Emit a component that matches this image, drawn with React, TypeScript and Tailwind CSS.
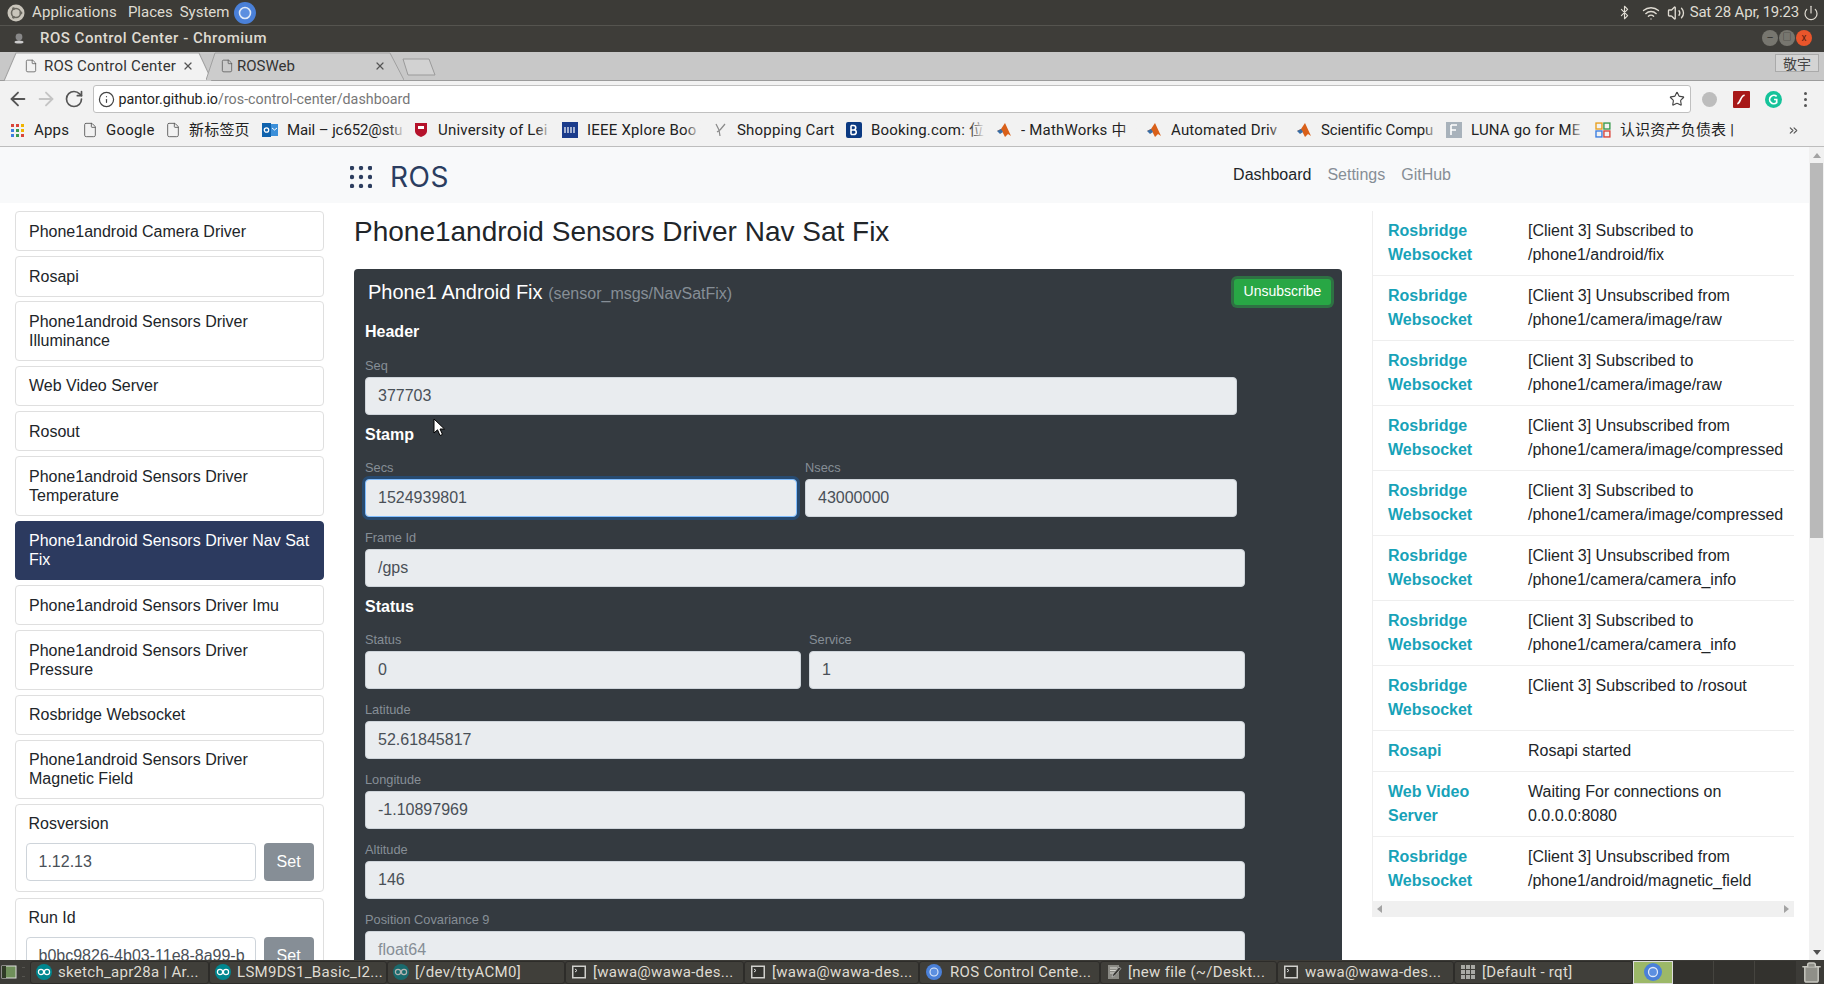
import { ArrowLeft, ArrowRight, RotateCw, Info, Star, File, Bluetooth, Wifi, Volume2, Power, Trash2, ChevronsRight, X } from 'lucide-react';

const uiFont = "font-['Roboto','Noto_Sans_CJK_SC',sans-serif]";

const ChromeLogo = ({ className }: { className: string }) => (
  <svg viewBox="0 0 20 20" className={className}>
    <circle cx="10" cy="10" r="10" fill="#4a80d8" />
    <circle cx="10" cy="10" r="5" fill="#5c8fe0" stroke="#dfe9f8" strokeWidth="1.4" />
  </svg>
);

const ArduinoIcon = ({ dim }: { dim?: boolean }) => (
  <svg viewBox="0 0 16 16" className={dim ? 'w-4 h-4 opacity-60' : 'w-4 h-4'}>
    <circle cx="8" cy="8" r="8" fill="#00878f" />
    <circle cx="5" cy="8" r="2.6" fill="none" stroke="#fff" strokeWidth="1.2" />
    <circle cx="11" cy="8" r="2.6" fill="none" stroke="#fff" strokeWidth="1.2" />
  </svg>
);

const TerminalIcon = () => (
  <svg viewBox="0 0 16 16" className="w-4 h-4">
    <rect x="1" y="1.5" width="14" height="13" fill="#d0d0cc" />
    <rect x="2.5" y="3" width="11" height="10" fill="#33332f" />
    <path d="M4 5l2 1.5L4 8" stroke="#ddd" fill="none" strokeWidth="1" />
  </svg>
);

const EditorIcon = () => (
  <svg viewBox="0 0 16 16" className="w-4 h-4">
    <rect x="2" y="1" width="11" height="14" fill="#8a8a84" />
    <path d="M4 4h7M4 6.5h7M4 9h5" stroke="#d6d6d0" strokeWidth="1" />
    <path d="M6 13l1-3 6-7 2 1.5-6 7z" fill="#3a3a36" stroke="#ccc" strokeWidth="0.6" />
  </svg>
);

const GridIcon = () => (
  <svg viewBox="0 0 16 16" className="w-4 h-4" fill="#a9a9a4">
    {[1, 6, 11].map((y) => [1, 6, 11].map((x) => <rect key={`${x}-${y}`} x={x} y={y} width="4" height="4" />))}
  </svg>
);

const bookmarks = [
  { label: 'Apps', box: 'w-[73px]', text: 'w-[36px]', icon: 'apps', fade: false },
  { label: 'Google', box: 'w-[83px]', text: 'w-[52px]', icon: 'file', fade: false },
  { label: '新标签页', box: 'w-[95px]', text: 'w-[62px]', icon: 'file', fade: false },
  { label: 'Mail – jc652@stu', box: 'w-[151px]', text: 'w-[118px] tracking-[-0.1px]', icon: 'mail', fade: true },
  { label: 'University of Lei', box: 'w-[149px]', text: 'w-[114px]', icon: 'uni', fade: true },
  { label: 'IEEE Xplore Boo', box: 'w-[150px]', text: 'w-[114px]', icon: 'ieee', fade: true },
  { label: 'Shopping Cart', box: 'w-[134px]', text: 'w-[102px]', icon: 'cart', fade: false },
  { label: 'Booking.com: 位', box: 'w-[150px]', text: 'w-[114px]', icon: 'booking', fade: true },
  { label: '- MathWorks 中', box: 'w-[150px]', text: 'w-[116px]', icon: 'matlab', fade: true },
  { label: 'Automated Driv', box: 'w-[150px]', text: 'w-[114px]', icon: 'matlab', fade: true },
  { label: 'Scientific Compu', box: 'w-[150px]', text: 'w-[118px] tracking-[-0.1px]', icon: 'matlab', fade: true },
  { label: 'LUNA go for ME', box: 'w-[149px]', text: 'w-[114px]', icon: 'luna', fade: true },
  { label: '认识资产负债表 |', box: 'w-[140px]', text: 'w-[116px]', icon: 'asset', fade: false },
];

const BookmarkIcon = ({ kind }: { kind: string }) => {
  if (kind === 'file') return <File className="w-4 h-4 -ml-[2px] -mr-[1px] text-[#555]" strokeWidth={1.3} />;
  if (kind === 'apps') {
    const colors = ['#d9453a', '#d9453a', '#f0b400', '#3d7fe0', '#3b9b4f', '#f0b400', '#3d7fe0', '#3b9b4f', '#d9453a'];
    return (
      <span className="grid grid-cols-3 gap-[2px] w-[13px] mr-[1px]">
        {colors.map((c, i) => (
          <svg key={i} viewBox="0 0 3 3" className="w-[3px] h-[3px]"><rect width="3" height="3" fill={c} /></svg>
        ))}
      </span>
    );
  }
  if (kind === 'mail') return (
    <svg viewBox="0 0 16 16" className="w-4 h-4"><rect x="5" y="2" width="11" height="12" fill="#3b8fd9" /><rect y="1" width="9" height="14" fill="#0f62ad" /><circle cx="4.5" cy="8" r="2.2" fill="none" stroke="#fff" strokeWidth="1.3" /><path d="M10 6l2.5 2L15 6" stroke="#fff" fill="none" /></svg>
  );
  if (kind === 'uni') return (
    <svg viewBox="0 0 16 16" className="w-4 h-4"><path d="M2 1h12v8c0 3-3 5-6 6-3-1-6-3-6-6z" fill="#b5122b" /><path d="M5 4h6v3H5z" fill="#fff" /></svg>
  );
  if (kind === 'ieee') return (
    <svg viewBox="0 0 16 16" className="w-4 h-4"><rect width="16" height="16" fill="#1b3c8c" /><path d="M3 5v6M6 5v6M9 5v6M12 5v6" stroke="#fff" strokeWidth="1.2" /></svg>
  );
  if (kind === 'cart') return (
    <svg viewBox="0 0 16 16" className="w-4 h-4"><path d="M4 2l3 6 1 6M8 8l5-6M8 8L5 10" stroke="#8a8a8a" fill="none" strokeWidth="1.2" /></svg>
  );
  if (kind === 'booking') return (
    <svg viewBox="0 0 16 16" className="w-4 h-4"><rect width="16" height="16" rx="2" fill="#0b3a82" /><path d="M5 3.5v9M5 3.5h2.5a2.2 2.2 0 010 4.5H5m0 0h3a2.2 2.2 0 010 4.5H5" stroke="#fff" fill="none" strokeWidth="1.6" /></svg>
  );
  if (kind === 'matlab') return (
    <svg viewBox="0 0 16 16" className="w-4 h-4"><path d="M1 9l4-2 4-6 6 13-3-2-3 3-3-6z" fill="#d9601a" /><path d="M1 9l4-2 2 3-3 2z" fill="#3a6ea5" /></svg>
  );
  if (kind === 'luna') return (
    <svg viewBox="0 0 16 16" className="w-4 h-4"><rect width="16" height="16" fill="#a8b2bb" /><path d="M5 3h6M5 3v10M5 8h5" stroke="#fff" strokeWidth="1.6" fill="none" /></svg>
  );
  return (
    <svg viewBox="0 0 16 16" className="w-4 h-4" fill="none" strokeWidth="1.4"><rect x="1" y="1" width="6" height="6" stroke="#e8a020" /><rect x="9" y="1" width="6" height="6" stroke="#3b9b4f" /><rect x="1" y="9" width="6" height="6" stroke="#3d7fe0" /><rect x="9" y="9" width="6" height="6" stroke="#d9453a" /></svg>
  );
};

const sidebarItems = [
  { label: 'Phone1android Camera Driver' },
  { label: 'Rosapi' },
  { label: 'Phone1android Sensors Driver Illuminance' },
  { label: 'Web Video Server' },
  { label: 'Rosout' },
  { label: 'Phone1android Sensors Driver Temperature' },
  { label: 'Phone1android Sensors Driver Nav Sat Fix', active: true },
  { label: 'Phone1android Sensors Driver Imu' },
  { label: 'Phone1android Sensors Driver Pressure' },
  { label: 'Rosbridge Websocket' },
  { label: 'Phone1android Sensors Driver Magnetic Field' },
];

const logs = [
  ['Rosbridge Websocket', '[Client 3] Subscribed to /phone1/android/fix'],
  ['Rosbridge Websocket', '[Client 3] Unsubscribed from /phone1/camera/image/raw'],
  ['Rosbridge Websocket', '[Client 3] Subscribed to /phone1/camera/image/raw'],
  ['Rosbridge Websocket', '[Client 3] Unsubscribed from /phone1/camera/image/compressed'],
  ['Rosbridge Websocket', '[Client 3] Subscribed to /phone1/camera/image/compressed'],
  ['Rosbridge Websocket', '[Client 3] Unsubscribed from /phone1/camera/camera_info'],
  ['Rosbridge Websocket', '[Client 3] Subscribed to /phone1/camera/camera_info'],
  ['Rosbridge Websocket', '[Client 3] Subscribed to /rosout'],
  ['Rosapi', 'Rosapi started'],
  ['Web Video Server', 'Waiting For connections on 0.0.0.0:8080'],
  ['Rosbridge Websocket', '[Client 3] Unsubscribed from /phone1/android/magnetic_field'],
];

const tasks = [
  { label: 'sketch_apr28a | Ar...', w: 'w-[179px]', icon: <ArduinoIcon /> },
  { label: 'LSM9DS1_Basic_I2...', w: 'w-[178px]', icon: <ArduinoIcon /> },
  { label: '[/dev/ttyACM0]', w: 'w-[178px]', icon: <ArduinoIcon dim /> },
  { label: '[wawa@wawa-des...', w: 'w-[179px]', icon: <TerminalIcon /> },
  { label: '[wawa@wawa-des...', w: 'w-[175px]', icon: <TerminalIcon /> },
  { label: 'ROS Control Cente...', w: 'w-[181px]', icon: <ChromeLogo className="w-4 h-4 ml-[1px] mr-[2px]" /> },
  { label: '[new file (~/Deskt...', w: 'w-[177px]', icon: <EditorIcon /> },
  { label: 'wawa@wawa-des...', w: 'w-[177px]', icon: <TerminalIcon /> },
  { label: '[Default - rqt]', w: 'w-[179px]', icon: <GridIcon /> },
];

const Field = ({ label, value, className = '', focus, muted }: { label: string; value: string; className?: string; focus?: boolean; muted?: boolean }) => (
  <div className={className}>
    <div className="text-[12.8px] leading-[15px] pb-[4.2px] text-[#868e96]">{label}</div>
    <div
      className={
        focus
          ? 'h-[38px] rounded-[4px] border border-[#80bdff] bg-[#e9ecef] px-3 leading-[36px] text-[#495057] shadow-[0_0_0_3px_rgba(0,123,255,0.25)]'
          : muted
            ? 'h-[38px] rounded-[4px] border border-[#ced4da] bg-[#e9ecef] px-3 leading-[36px] text-[#868e96]'
            : 'h-[38px] rounded-[4px] border border-[#ced4da] bg-[#e9ecef] px-3 leading-[36px] text-[#495057]'
      }
    >
      {value}
    </div>
  </div>
);

const ParamCard = ({ label, value }: { label: string; value: string }) => (
  <div className="rounded-[4px] border border-[#dfdfdf] bg-white px-[9.5px] pt-[5px] pb-[10px] mb-[5.6px]">
    <div className="pl-[3px] h-[33px] leading-[24px] text-[#212529] pt-[2px]">{label}</div>
    <div className="flex gap-2">
      <div className="w-[231px] h-[38px] rounded-[4px] border border-[#ced4da] px-3 leading-[36px] text-[#495057] overflow-hidden whitespace-nowrap">{value}</div>
      <div className="w-[50px] h-[38px] rounded-[4px] bg-[#868e96] text-white text-center leading-[38px]">Set</div>
    </div>
  </div>
);

export default function App() {
  return (
    <div className="w-[1824px] h-[984px] overflow-hidden flex flex-col bg-white font-['Liberation_Sans',sans-serif] text-[16px] text-[#212529]">
      {/* Ubuntu top panel */}
      <div className={`h-[26px] shrink-0 bg-[#3c3b37] border-b border-[#55544f] flex items-center pl-[7px] pr-[5px] text-[15px] text-[#dfdbd2] ${uiFont}`}>
        <svg viewBox="0 0 18 18" className="w-[18px] h-[18px]">
          <circle cx="9" cy="9" r="8.5" fill="#c9c5bb" />
          <circle cx="9" cy="9" r="4.5" fill="none" stroke="#6a6860" strokeWidth="1.6" />
          <circle cx="14" cy="9" r="1.4" fill="#6a6860" />
          <circle cx="6.5" cy="4.7" r="1.4" fill="#6a6860" />
          <circle cx="6.5" cy="13.3" r="1.4" fill="#6a6860" />
        </svg>
        <span className="ml-[7px] tracking-[0.15px]">Applications</span>
        <span className="ml-[11px]">Places</span>
        <span className="ml-[7px]">System</span>
        <ChromeLogo className="w-[22px] h-[22px] ml-[5px]" />
        <div className="ml-auto flex items-center">
          <Bluetooth className="w-[15px] h-[17px] mr-[10px]" strokeWidth={1.8} />
          <Wifi className="w-[18px] h-[18px] mr-[7px]" strokeWidth={1.8} />
          <Volume2 className="w-[18px] h-[18px] mr-[5px]" strokeWidth={1.8} />
          <span className="whitespace-nowrap tracking-[-0.2px]">Sat 28 Apr, 19:23</span>
          <Power className="w-[16px] h-[16px] ml-[4px]" strokeWidth={1.8} />
        </div>
      </div>

      {/* Window title */}
      <div className={`h-[26px] shrink-0 bg-[#3e3d39] flex items-center pl-[14px] pr-[12px] pb-[2px] text-[15px] text-[#dfdbd2] ${uiFont}`}>
        <svg viewBox="0 0 10 14" className="w-[10px] h-[14px]">
          <circle cx="5" cy="6" r="3.4" fill="#888" />
          <ellipse cx="5" cy="11" rx="4.5" ry="1.6" fill="#ccc" />
        </svg>
        <span className="ml-[16px] font-medium tracking-[0.5px]">ROS Control Center - Chromium</span>
        <div className="ml-auto flex items-center gap-[1px]">
          <span className="w-[16px] h-[16px] rounded-full bg-[#77766f] text-center text-[11px] leading-[15px] text-[#33332f]">–</span>
          <span className="w-[16px] h-[16px] rounded-full bg-[#77766f] text-center text-[9px] leading-[15px] text-[#33332f]">□</span>
          <span className="w-[16px] h-[16px] rounded-full bg-[#e9552b] text-center text-[10px] leading-[15px] text-[#5a2010]">x</span>
        </div>
      </div>

      {/* Tab strip */}
      <div className={`h-[29px] shrink-0 bg-[#c8c8c8] border-b border-[#9c9c9c] flex items-end text-[15px] text-[#333] ${uiFont}`}>
        <div className="relative ml-[4px] w-[208px] h-[28px] flex items-center pl-[20px]">
          <svg viewBox="0 0 208 28" className="absolute inset-0 w-[208px] h-[29px]" preserveAspectRatio="none">
            <path d="M0 28L12 1H195L208 28Z" fill="#f2f2f2" stroke="#a0a0a0" />
          </svg>
          <File className="relative w-[14px] h-[16px] text-[#555]" strokeWidth={1.3} />
          <span className="relative ml-[6px] tracking-[0.2px]">ROS Control Center</span>
          <X className="relative ml-[6px] w-[12px] h-[12px] text-[#555]" strokeWidth={2.4} />
        </div>
        <div className="relative -ml-[6px] w-[198px] h-[28px] flex items-center pl-[14px]">
          <svg viewBox="0 0 198 28" className="absolute inset-0 w-[198px] h-[28px]" preserveAspectRatio="none">
            <path d="M0 28L9 1H184L198 28" fill="#cccccc" stroke="#a0a0a0" />
          </svg>
          <File className="relative w-[14px] h-[16px] text-[#555]" strokeWidth={1.3} />
          <span className="relative ml-[3px]">ROSWeb</span>
          <X className="relative ml-auto mr-[18px] w-[12px] h-[12px] text-[#555]" strokeWidth={2.4} />
        </div>
        <svg viewBox="0 0 34 18" className="w-[34px] h-[18px] mb-[4px] -ml-[2px]">
          <path d="M1 1H27L33 17H6Z" fill="#d2d2d2" stroke="#9a9a9a" />
        </svg>
        <div className="ml-auto mr-[5px] mb-[8px] w-[44px] h-[18px] border border-[#aaa] bg-[#d4d4d4] text-center text-[14px] leading-[16px] text-[#444] font-['Noto_Sans_CJK_SC',sans-serif]">敬宇</div>
      </div>

      {/* Toolbar */}
      <div className={`h-[36px] shrink-0 bg-[#f2f2f2] flex items-center pl-[7px] pr-[17px] ${uiFont}`}>
        <ArrowLeft className="w-[22px] h-[22px] text-[#555]" strokeWidth={2} />
        <ArrowRight className="w-[22px] h-[22px] ml-[6px] text-[#c4c4c4]" strokeWidth={2} />
        <RotateCw className="w-[20px] h-[20px] ml-[7px] text-[#555]" strokeWidth={2} />
        <div className="ml-[8.5px] flex-1 h-[28px] bg-white border border-[#c0c0c0] rounded-[3px] flex items-center pl-[4px] pr-[5px] text-[14.3px]">
          <Info className="w-[17px] h-[17px] text-[#444]" strokeWidth={1.7} />
          <span className="ml-[4px] pt-[1px] text-[#222]">pantor.github.io</span>
          <span className="pt-[1px] text-[#777]">/ros-control-center/dashboard</span>
          <Star className="ml-auto w-[16px] h-[16px] text-[#444]" strokeWidth={1.7} />
        </div>
        <div className="ml-[11px] w-[15px] h-[15px] rounded-full bg-[#bdbdbd]" />
        <svg viewBox="0 0 16 16" className="ml-[16px] w-[17px] h-[17px]">
          <rect width="16" height="16" rx="1" fill="#a81818" />
          <path d="M4 12c3 0 3-8 7-8" stroke="#fff" fill="none" strokeWidth="1.6" />
        </svg>
        <svg viewBox="0 0 16 16" className="ml-[15px] w-[17px] h-[17px]">
          <circle cx="8" cy="8" r="8" fill="#15c39a" />
          <path d="M11 5a4 4 0 100 6V8H8.5" stroke="#fff" fill="none" strokeWidth="1.6" />
        </svg>
        <div className="ml-[22px] flex flex-col gap-[3px]">
          <span className="w-[3px] h-[3px] rounded-full bg-[#555]" />
          <span className="w-[3px] h-[3px] rounded-full bg-[#555]" />
          <span className="w-[3px] h-[3px] rounded-full bg-[#555]" />
        </div>
      </div>

      {/* Bookmarks */}
      <div className={`h-[30px] shrink-0 bg-[#f2f2f2] border-b border-[#bdbdbd] flex items-center pl-[11px] pb-[3px] text-[15px] text-[#222] tracking-[0.2px] ${uiFont}`}>
        {bookmarks.map((b) => (
          <div key={b.label} className={`${b.box} shrink-0 flex items-center gap-[9px]`}>
            <BookmarkIcon kind={b.icon} />
            <span className={`${b.text} relative overflow-hidden whitespace-nowrap`}>
              {b.label}
              {b.fade && <span className="absolute right-0 top-0 bottom-0 w-[16px] bg-gradient-to-l from-[#f2f2f2] to-transparent" />}
            </span>
          </div>
        ))}
        <ChevronsRight className="ml-[52px] w-[13px] h-[13px] text-[#555]" />
      </div>

      {/* Page + scrollbar */}
      <div className="flex-1 min-h-0 flex">
        <div className="flex-1 min-w-0 flex flex-col overflow-hidden">
          <div className="h-[56px] shrink-0 bg-[#f8f9fa] flex items-center">
            <svg viewBox="0 0 22 22" className="ml-[350px] w-[22px] h-[22px] mt-[3px]" fill="#2d3e5f">
              {[2, 11, 20].map((y) => [2, 11, 20].map((x) => <circle key={`${x}-${y}`} cx={x} cy={y} r="2.2" />))}
            </svg>
            <span className="ml-[18px] mt-[4px] text-[28px] tracking-[0.5px] text-[#2b3d60] font-['Inter',sans-serif]">ROS</span>
            <div className="ml-auto mr-[358px] flex gap-4">
              <span className="text-[#212529]">Dashboard</span>
              <span className="text-[#868e96]">Settings</span>
              <span className="text-[#868e96]">GitHub</span>
            </div>
          </div>

          <div className="flex-1 min-h-0 flex">
            {/* Sidebar */}
            <div className="w-[339px] shrink-0 pl-[15px] pr-[15px] pt-[8px]">
              {sidebarItems.map((item) => (
                <div
                  key={item.label}
                  className={
                    item.active
                      ? 'mb-[4.8px] rounded-[4px] border border-[#2c3a5f] bg-[#2c3a5f] px-[13px] py-[9.6px] leading-[19.2px] text-white'
                      : 'mb-[4.8px] rounded-[4px] border border-[#dfdfdf] bg-white px-[13px] py-[9.6px] leading-[19.2px]'
                  }
                >
                  {item.label}
                </div>
              ))}
              <ParamCard label="Rosversion" value="1.12.13" />
              <ParamCard label="Run Id" value="b0bc9826-4b03-11e8-8a99-b" />
            </div>

            {/* Main column */}
            <div className="w-[1033px] shrink-0 pl-[15px] pr-[15px] pt-[8px]">
              <h1 className="text-[28px] leading-[33.6px] pt-[4px] mb-[20.4px] text-[#212529]">Phone1android Sensors Driver Nav Sat Fix</h1>
              <div className="relative w-[988px] rounded-t-[4px] bg-[#343a40] pl-[11px] pt-[11px] pb-[40px] text-white">
                <div className="pl-[3px] h-[24px] leading-[24px] text-[20px]">
                  Phone1 Android Fix <span className="text-[16px] text-[#868e96]">(sensor_msgs/NavSatFix)</span>
                </div>
                <div className="absolute top-[10px] right-[11px] w-[97px] h-[26px] rounded-[3px] bg-[#28a745] text-center text-[14px] leading-[25px] shadow-[0_0_0_3px_rgba(40,167,69,0.5)]">Unsubscribe</div>
                <div className="mt-[16.5px] font-bold leading-[24px]">Header</div>
                <Field className="mt-[13.3px] w-[872px]" label="Seq" value="377703" />
                <div className="mt-[8px] font-bold leading-[24px]">Stamp</div>
                <div className="mt-[13px] flex gap-[8px] w-[872px]">
                  <Field className="flex-1" label="Secs" value="1524939801" focus />
                  <Field className="flex-1" label="Nsecs" value="43000000" />
                </div>
                <Field className="mt-[12.8px] w-[880px]" label="Frame Id" value="/gps" />
                <div className="mt-[8px] font-bold leading-[24px]">Status</div>
                <div className="mt-[13px] flex gap-[8px] w-[880px]">
                  <Field className="flex-1" label="Status" value="0" />
                  <Field className="flex-1" label="Service" value="1" />
                </div>
                <Field className="mt-[12.8px] w-[880px]" label="Latitude" value="52.61845817" />
                <Field className="mt-[12.8px] w-[880px]" label="Longitude" value="-1.10897969" />
                <Field className="mt-[12.8px] w-[880px]" label="Altitude" value="146" />
                <Field className="mt-[12.8px] w-[880px]" label="Position Covariance 9" value="float64" muted />
                {/* mouse pointer */}
                <svg viewBox="0 0 12 19" className="absolute left-[79px] top-[149px] w-[12px] h-[19px]">
                  <path d="M1 1v14l3.5-3.2L7 17.5l2.5-1.1L7 11h4.5z" fill="#fff" stroke="#000" strokeWidth="1" />
                </svg>
              </div>
            </div>

            {/* Log */}
            <div className="w-[422px] shrink-0 pt-[8px]">
              <div className="border-l border-[#eeeeee]">
                {logs.map(([name, msg], i) => (
                  <div key={i} className="flex border-b border-[#eeeeee] last:border-b-0 py-[8px] leading-[24px]">
                    <div className="w-[155px] shrink-0 pl-[15px] pr-[20px] font-bold text-[#17a2b8]">{name}</div>
                    <div className="flex-1 pr-[6px]">{msg}</div>
                  </div>
                ))}
              </div>
              <div className="h-[16px] bg-[#f0f0f0] flex items-center justify-between px-[5px]">
                <svg viewBox="0 0 5 8" className="w-[5px] h-[8px]"><path d="M5 0v8L0 4z" fill="#a3a3a3" /></svg>
                <svg viewBox="0 0 5 8" className="w-[5px] h-[8px]"><path d="M0 0v8l5-4z" fill="#a3a3a3" /></svg>
              </div>
            </div>
          </div>
        </div>

        {/* Page scrollbar */}
        <div className="w-[15px] shrink-0 bg-[#f1f1f1] flex flex-col items-center">
          <svg viewBox="0 0 8 5" className="mt-[6px] w-[8px] h-[5px]"><path d="M0 5h8L4 0z" fill="#a3a3a3" /></svg>
          <div className="mt-[5px] w-[13px] h-[375px] bg-[#b9b9b9]" />
          <svg viewBox="0 0 8 5" className="mt-auto mb-[5px] w-[8px] h-[5px]"><path d="M0 0h8L4 5z" fill="#505050" /></svg>
        </div>
      </div>

      {/* Taskbar */}
      <div className={`h-[24px] shrink-0 bg-[#3c3b37] flex items-center text-[15px] tracking-[0.3px] text-[#dfdbd2] ${uiFont}`}>
        <svg viewBox="0 0 16 16" className="ml-[1px] w-[16px] h-[16px]">
          <rect x="1" y="2" width="14" height="12" fill="#6f8f5a" stroke="#ddd" />
          <rect x="1" y="2" width="4" height="12" fill="#2f3a26" />
        </svg>
        <div className="w-[13px] flex justify-center">
          <div className="w-[3px] h-[10px] border-y border-[#55544f]" />
        </div>
        {tasks.map((t, i) => (
          <div key={i} className={`${t.w} shrink-0 h-[23px] flex items-center gap-[6px] pl-[5px] rounded-[3px] border border-[#2d2c29] bg-[#403f3a] whitespace-nowrap overflow-hidden`}>
            {t.icon}
            <span>{t.label}</span>
          </div>
        ))}
        <div className="w-[40px] h-[23px] bg-[#9cb868] border border-[#ddd] flex items-center justify-center">
          <ChromeLogo className="w-[18px] h-[18px]" />
        </div>
        <div className="w-[41px] h-[23px] bg-[#33322e] border-r border-[#45443f]" />
        <div className="w-[41px] h-[23px] bg-[#33322e] border-r border-[#45443f]" />
        <div className="w-[41px] h-[23px] bg-[#33322e]" />
        <div className="ml-auto mr-[1px]">
          <Trash2 className="w-[23px] h-[23px] text-[#c8c8c0] fill-[#8f8f88]" strokeWidth={1.5} />
        </div>
      </div>
    </div>
  );
}
